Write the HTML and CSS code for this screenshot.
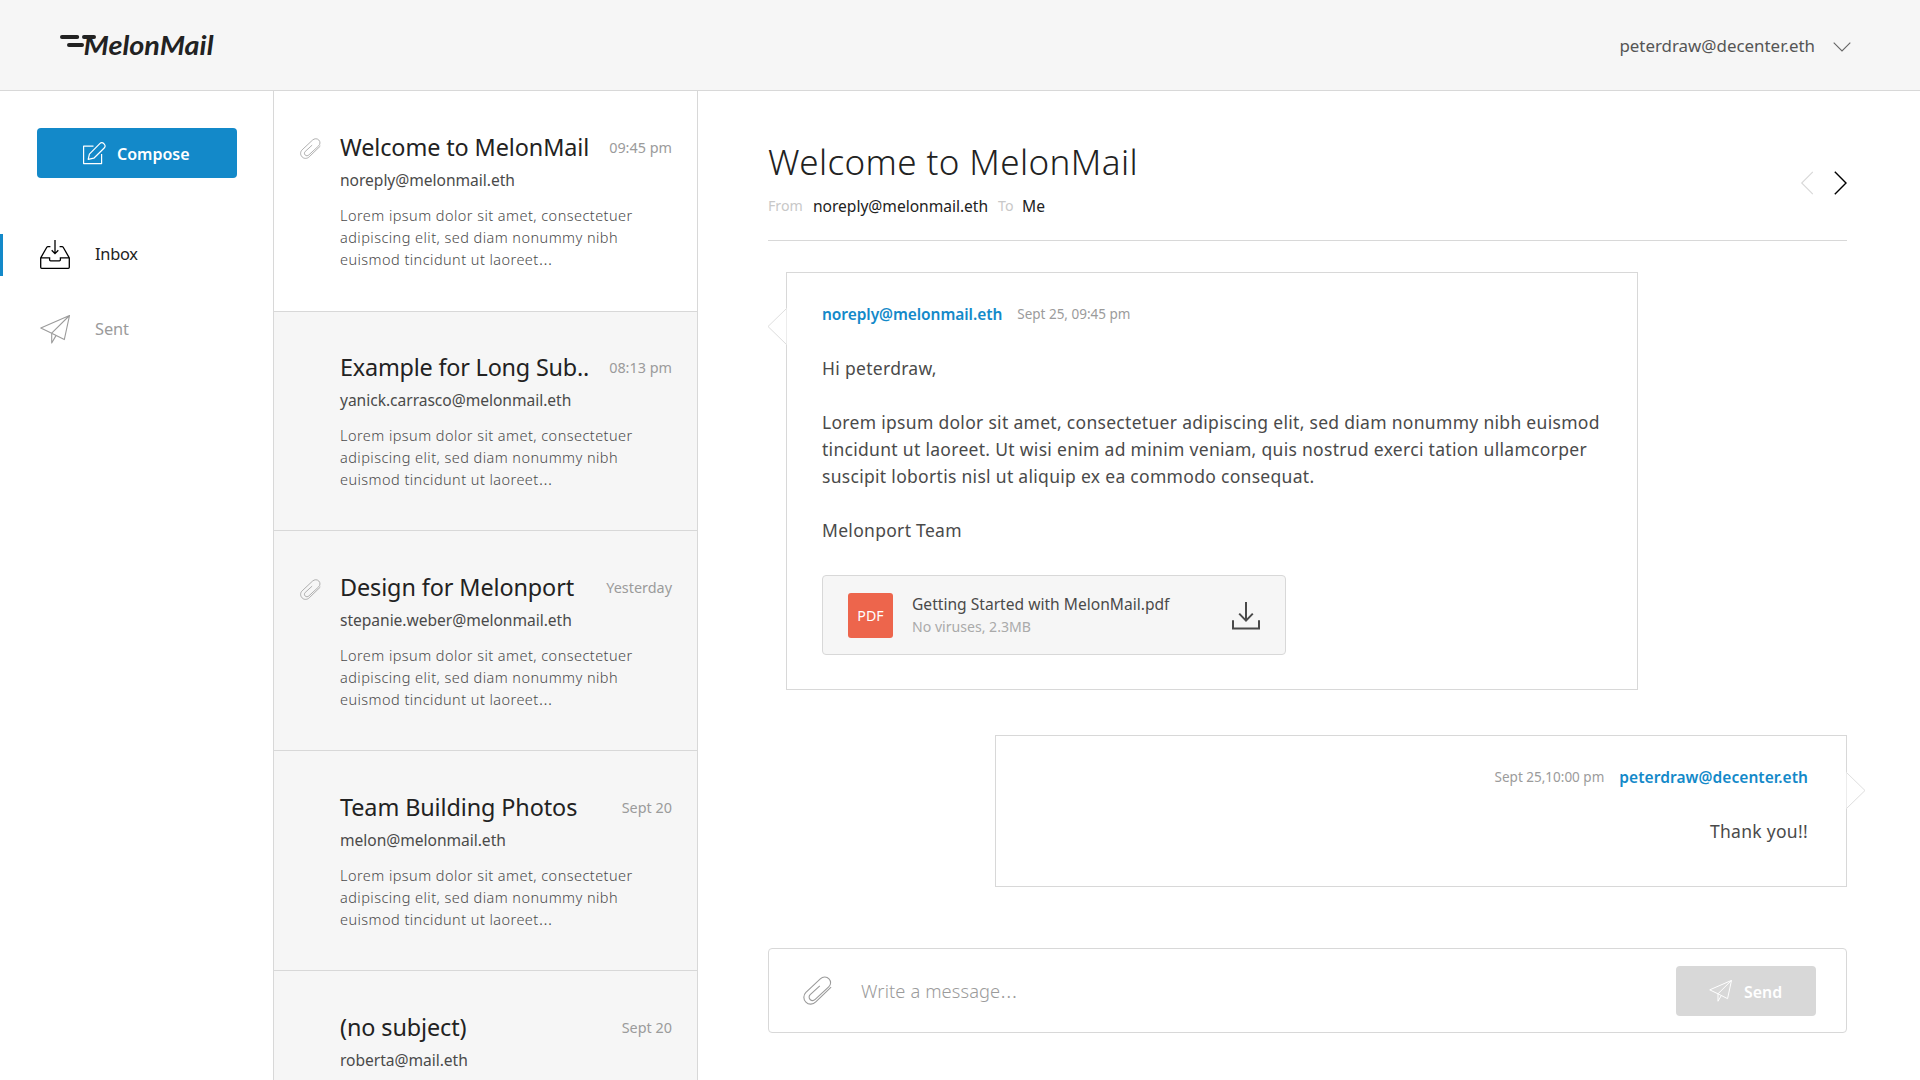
FILE: index.html
```html
<!DOCTYPE html>
<html lang="en">
<head>
<meta charset="utf-8">
<title>MelonMail</title>
<link rel="stylesheet" href="styles.css">
</head>
<body>
<svg class="defs" width="0" height="0" aria-hidden="true">
  <symbol id="clip" viewBox="-0.5 -0.5 29 29"><path d="M27.6 10.6L12.3 25.4C9.5 28.2 5.2 28.5 2.4 25.6C-.4 22.8-.3 18.6 2.4 15.9L16.8 2.4C19.3 0 23.2-.1 25.5 2.3C27.8 4.7 27.5 8.2 25.2 10.4L11.7 22.9C10.2 24.3 8 24.4 6.6 23C5.2 21.6 5.3 19.5 6.7 18.1L16.3 9.3"/></symbol>
  <symbol id="plane" viewBox="0 0 30 29"><path d="M29.5.5L.8 13L11.7 18.2L24.3 24.6ZM29.5.5L11.7 18.2V28L16 20.6" stroke-linejoin="round"/></symbol>
</svg>
<header class="topbar">
  <svg class="logo" width="170" height="40" viewBox="0 0 170 40">
    <path d="M3 12H18.2M25 12H35M10 20H23" fill="none" stroke="#222" stroke-width="4" stroke-linecap="round"/>
    <text class="logo-text" x="24.5" y="30" textLength="130" lengthAdjust="spacingAndGlyphs">MelonMail</text>
  </svg>
  <div class="account">
    <span>peterdraw@decenter.eth</span>
    <svg width="18" height="10" viewBox="0 0 18 10"><path d="M.7.7L9 9L17.3.7" fill="none" stroke="#666" stroke-width="1.1"/></svg>
  </div>
</header>
<div class="app">
  <nav class="sidebar">
    <button class="compose">
      <svg width="23" height="23" viewBox="0 0 23 23"><path d="M10.5 4.2H.6V21.6H18.6V12M5.2 17.4L6.4 12.2L16.8 1.6Q18.8-.2 21 1.8Q23.2 4 21.2 6L10.8 16.2Z" fill="none" stroke="#fff" stroke-width="1.2" stroke-linejoin="round"/></svg>
      <span>Compose</span>
    </button>
    <a class="folder active">
      <svg width="30" height="29" viewBox="0 0 30 29"><path d="M10.4 6.6H8Q7.2 6.6 6.8 7.3L.7 17.9V27.3Q.7 28.3 1.7 28.3H28.3Q29.3 28.3 29.3 27.3V17.9L23.2 7.3Q22.8 6.6 22 6.6H19.6M.7 17.9H9.6V19.8Q9.6 20.8 10.6 20.8H19.4Q20.4 20.8 20.4 19.8V17.9H29.3M15 0V13.4M11.7 10.3L15 13.6L18.3 10.3" fill="none" stroke="#000" stroke-width="1.3"/></svg>
      <span>Inbox</span>
    </a>
    <a class="folder">
      <svg class="line" width="30" height="29"><use href="#plane"/></svg>
      <span>Sent</span>
    </a>
  </nav>
  <section class="list">
    <article class="mail selected">
      <div class="flag"><svg class="line" width="21" height="21"><use href="#clip"/></svg></div>
      <div class="summary">
        <div class="row"><h2>Welcome to MelonMail</h2><time>09:45 pm</time></div>
        <div class="sender">noreply@melonmail.eth</div>
        <p>Lorem ipsum dolor sit amet, consectetuer<br>adipiscing elit, sed diam nonummy nibh<br>euismod tincidunt ut laoreet<span class="dots">…</span></p>
      </div>
    </article>
    <article class="mail second">
      <div class="flag"></div>
      <div class="summary">
        <div class="row"><h2>Example for Long Sub..</h2><time>08:13 pm</time></div>
        <div class="sender">yanick.carrasco@melonmail.eth</div>
        <p>Lorem ipsum dolor sit amet, consectetuer<br>adipiscing elit, sed diam nonummy nibh<br>euismod tincidunt ut laoreet<span class="dots">…</span></p>
      </div>
    </article>
    <article class="mail">
      <div class="flag"><svg class="line" width="21" height="21"><use href="#clip"/></svg></div>
      <div class="summary">
        <div class="row"><h2>Design for Melonport</h2><time>Yesterday</time></div>
        <div class="sender">stepanie.weber@melonmail.eth</div>
        <p>Lorem ipsum dolor sit amet, consectetuer<br>adipiscing elit, sed diam nonummy nibh<br>euismod tincidunt ut laoreet<span class="dots">…</span></p>
      </div>
    </article>
    <article class="mail">
      <div class="flag"></div>
      <div class="summary">
        <div class="row"><h2>Team Building Photos</h2><time>Sept 20</time></div>
        <div class="sender">melon@melonmail.eth</div>
        <p>Lorem ipsum dolor sit amet, consectetuer<br>adipiscing elit, sed diam nonummy nibh<br>euismod tincidunt ut laoreet<span class="dots">…</span></p>
      </div>
    </article>
    <article class="mail">
      <div class="flag"></div>
      <div class="summary">
        <div class="row"><h2>(no subject)</h2><time>Sept 20</time></div>
        <div class="sender">roberta@mail.eth</div>
      </div>
    </article>
  </section>
  <main class="thread">
    <div class="thread-head">
      <div>
        <h1>Welcome to MelonMail</h1>
        <div class="meta"><span class="label from">From</span><span>noreply@melonmail.eth</span><span class="label to">To</span><span>Me</span></div>
      </div>
      <div class="pager">
        <svg width="13" height="24" viewBox="0 0 13 24"><path d="M12.8.8L1.7 12L12.8 23.2" fill="none" stroke="#d8d8d8" stroke-width="1.1"/></svg>
        <svg width="13" height="24" viewBox="0 0 13 24"><path d="M.8.8L12 12L.8 23.2" fill="none" stroke="#000" stroke-width="1.4"/></svg>
      </div>
    </div>
    <div class="message incoming">
      <svg class="pointer" width="20" height="38" viewBox="0 0 20 38"><path d="M19.5 0L1 18.5L19.5 37Z" fill="#fff"/><path d="M19.5 .5L1 18.5L19.5 36.5" fill="none" stroke="#dedede"/></svg>
      <div class="message-head"><span class="author">noreply@melonmail.eth</span><span class="date">Sept 25, 09:45 pm</span></div>
      <div class="body">
        <p>Hi peterdraw,</p>
        <p>Lorem ipsum dolor sit amet, consectetuer adipiscing elit, sed diam nonummy nibh euismod<br>tincidunt ut laoreet. Ut wisi enim ad minim veniam, quis nostrud exerci tation ullamcorper<br>suscipit lobortis nisl ut aliquip ex ea commodo consequat.</p>
        <p>Melonport Team</p>
      </div>
      <div class="attachment">
        <div class="filetype">PDF</div>
        <div class="file"><div class="filename">Getting Started with MelonMail.pdf</div><div class="fileinfo">No viruses, 2.3MB</div></div>
        <svg width="28" height="28" viewBox="0 0 28 28"><path d="M14 0V18.5M7.2 11.6L14 18.6L20.8 11.6M1 18.3V26.4H27V18.3" fill="none" stroke="#4a4a4a" stroke-width="2"/></svg>
      </div>
    </div>
    <div class="message outgoing">
      <svg class="pointer" width="20" height="38" viewBox="0 0 20 38"><path d="M.5 0L19 18.5L.5 37Z" fill="#fff"/><path d="M.5 .5L19 18.5L.5 36.5" fill="none" stroke="#dedede"/></svg>
      <div class="message-head"><span class="date">Sept 25,10:00 pm</span><span class="author">peterdraw@decenter.eth</span></div>
      <div class="body"><p>Thank you!!</p></div>
    </div>
    <div class="reply">
      <svg class="line" width="29" height="29"><use href="#clip"/></svg>
      <span class="placeholder">Write a message<span class="dots">…</span></span>
      <button class="send"><svg width="23" height="22" viewBox="0 0 30 29"><use href="#plane"/></svg><span>Send</span></button>
    </div>
  </main>
</div>
</body>
</html>
```
FILE: styles.css
```css
* { box-sizing: border-box; }
body {
  margin: 0;
  height: 1080px;
  overflow: hidden;
  display: flex;
  flex-direction: column;
  background: #fff;
  color: #4a4a4a;
  font-family: "Noto Sans", "Open Sans", sans-serif;
}
h1, h2, p { margin: 0; font-weight: 400; }
svg { display: block; flex: none; }
button { border: 0; font: inherit; }
.defs { position: absolute; }
.line { fill: none; stroke: #9b9b9b; stroke-width: 1.1; }
.dots { font-family: "Open Sans", sans-serif; font-size: 1.3em; line-height: 1; }

.topbar {
  flex: none;
  height: 91px;
  padding: 0 69px 0 59px;
  display: flex;
  align-items: center;
  justify-content: space-between;
  background: #f6f6f6;
  border-bottom: 1px solid #d8d8d8;
}
.logo-text { font: italic 700 26.5px Lato, sans-serif; fill: #222; }
.account {
  display: flex;
  align-items: center;
  gap: 18px;
  font-size: 16.9px;
  color: #555;
}
.account svg { margin-top: 3px; }

.app { flex: 1; min-height: 0; display: flex; }

.sidebar { width: 273px; padding-top: 37px; }
.compose {
  display: flex;
  align-items: center;
  gap: 11px;
  width: 200px;
  height: 50px;
  margin: 0 0 56px 37px;
  padding: 0 0 0 46px;
  border-radius: 4px;
  background: #1389c9;
  color: #fff;
  font-size: 16px;
  font-weight: 600;
}
.compose span { padding-top: 2px; }
.folder {
  display: flex;
  align-items: center;
  gap: 25px;
  height: 42px;
  margin-bottom: 33px;
  padding: 0 0 2px 40px;
  font-size: 16.4px;
  line-height: 22px;
  letter-spacing: -.1px;
  color: #9b9b9b;
}
.folder.active {
  padding-left: 37px;
  border-left: 3px solid #1389c9;
  letter-spacing: -.25px;
  color: #222;
}

.list {
  width: 425px;
  overflow: hidden;
  border: solid #d8d8d8;
  border-width: 0 1px;
  background: #f6f6f6;
}
.mail {
  display: flex;
  height: 220px;
  padding-top: 40px;
  border-bottom: 1px solid #d8d8d8;
}
.mail.selected { height: 221px; background: #fff; }
.mail.second { height: 219px; padding-top: 39px; }
.flag { width: 66px; padding: 8px 0 0 26px; }
.selected .flag { padding-top: 7px; }
.summary { flex: 1; padding-right: 25px; }
.row { display: flex; justify-content: space-between; height: 32px; }
.row h2 {
  font-size: 23.4px;
  line-height: 32px;
  letter-spacing: -.1px;
  color: #222;
  white-space: nowrap;
}
.mail.second h2 { letter-spacing: -.2px; }
.row time { font-size: 14.4px; line-height: 33px; color: #9b9b9b; }
.sender {
  margin-top: 5px;
  font-size: 15.6px;
  line-height: 24px;
  letter-spacing: -.04px;
}
.summary p {
  margin-top: 12px;
  font-size: 14.5px;
  font-weight: 300;
  line-height: 22px;
  letter-spacing: .45px;
  white-space: nowrap;
}

.thread { flex: 1; padding: 0 73px 0 70px; }
.thread-head {
  display: flex;
  justify-content: space-between;
  height: 150px;
  margin-bottom: 31px;
  padding-top: 49px;
  border-bottom: 1px solid #d8d8d8;
}
.thread-head h1 {
  font-size: 35px;
  font-weight: 300;
  line-height: 44px;
  letter-spacing: .4px;
  color: #222;
}
.meta {
  display: flex;
  margin-top: 10px;
  font-size: 15.6px;
  line-height: 24px;
  letter-spacing: -.03px;
  color: #222;
}
.label { font-size: 14.2px; color: #c8c8c8; }
.from { width: 45px; }
.to { width: 24px; margin-left: 10px; }
.pager { display: flex; gap: 21px; padding-top: 30.5px; }

.message {
  position: relative;
  width: 852px;
  border: 1px solid #d8d8d8;
}
.incoming { height: 418px; margin-left: 18px; padding: 29px 35px 0; }
.outgoing { height: 152px; margin: 45px 0 0 auto; padding: 29px 38px 0; text-align: right; }
.pointer { position: absolute; top: 35px; }
.incoming .pointer { left: -20px; }
.outgoing .pointer { right: -20px; top: 36px; }
.message-head {
  display: flex;
  gap: 15px;
  margin-bottom: 29px;
  line-height: 24px;
}
.outgoing .message-head { justify-content: flex-end; }
.author { font-size: 15.5px; font-weight: 600; letter-spacing: -.06px; color: #1389c9; }
.outgoing .author { letter-spacing: .07px; }
.date { font-size: 13.5px; color: #9b9b9b; }
.body { font-size: 17.5px; line-height: 27px; letter-spacing: .3px; white-space: nowrap; }
.body p + p { margin-top: 27px; }
.attachment {
  display: flex;
  align-items: center;
  width: 464px;
  height: 80px;
  margin-top: 31px;
  padding: 0 25px;
  border: 1px solid #d8d8d8;
  border-radius: 4px;
  background: #f6f6f6;
}
.attachment svg { margin-top: 2px; }
.filetype {
  width: 45px;
  height: 45px;
  border-radius: 3px;
  background: #ed654c;
  color: #fff;
  font-size: 14.2px;
  line-height: 45px;
  text-align: center;
}
.file { flex: 1; padding-left: 19px; }
.filename { font-size: 15.6px; line-height: 22px; }
.fileinfo { font-size: 14.1px; line-height: 23px; color: #aaa; }

.reply {
  display: flex;
  align-items: center;
  height: 85px;
  margin-top: 61px;
  padding: 0 30px 0 34px;
  border: 1px solid #d8d8d8;
  border-radius: 4px;
}
.placeholder {
  flex: 1;
  padding-left: 29px;
  font-size: 18.3px;
  font-weight: 300;
  letter-spacing: .1px;
  color: #9b9b9b;
}
.send {
  display: flex;
  align-items: center;
  gap: 12px;
  width: 140px;
  height: 50px;
  padding: 0 0 0 33px;
  border-radius: 4px;
  background: #d8d8d8;
  color: #fff;
  font-size: 15.9px;
  font-weight: 600;
}
.send span { padding-top: 2px; }
.send svg { fill: none; stroke: #fff; stroke-width: 1.3; }
```
